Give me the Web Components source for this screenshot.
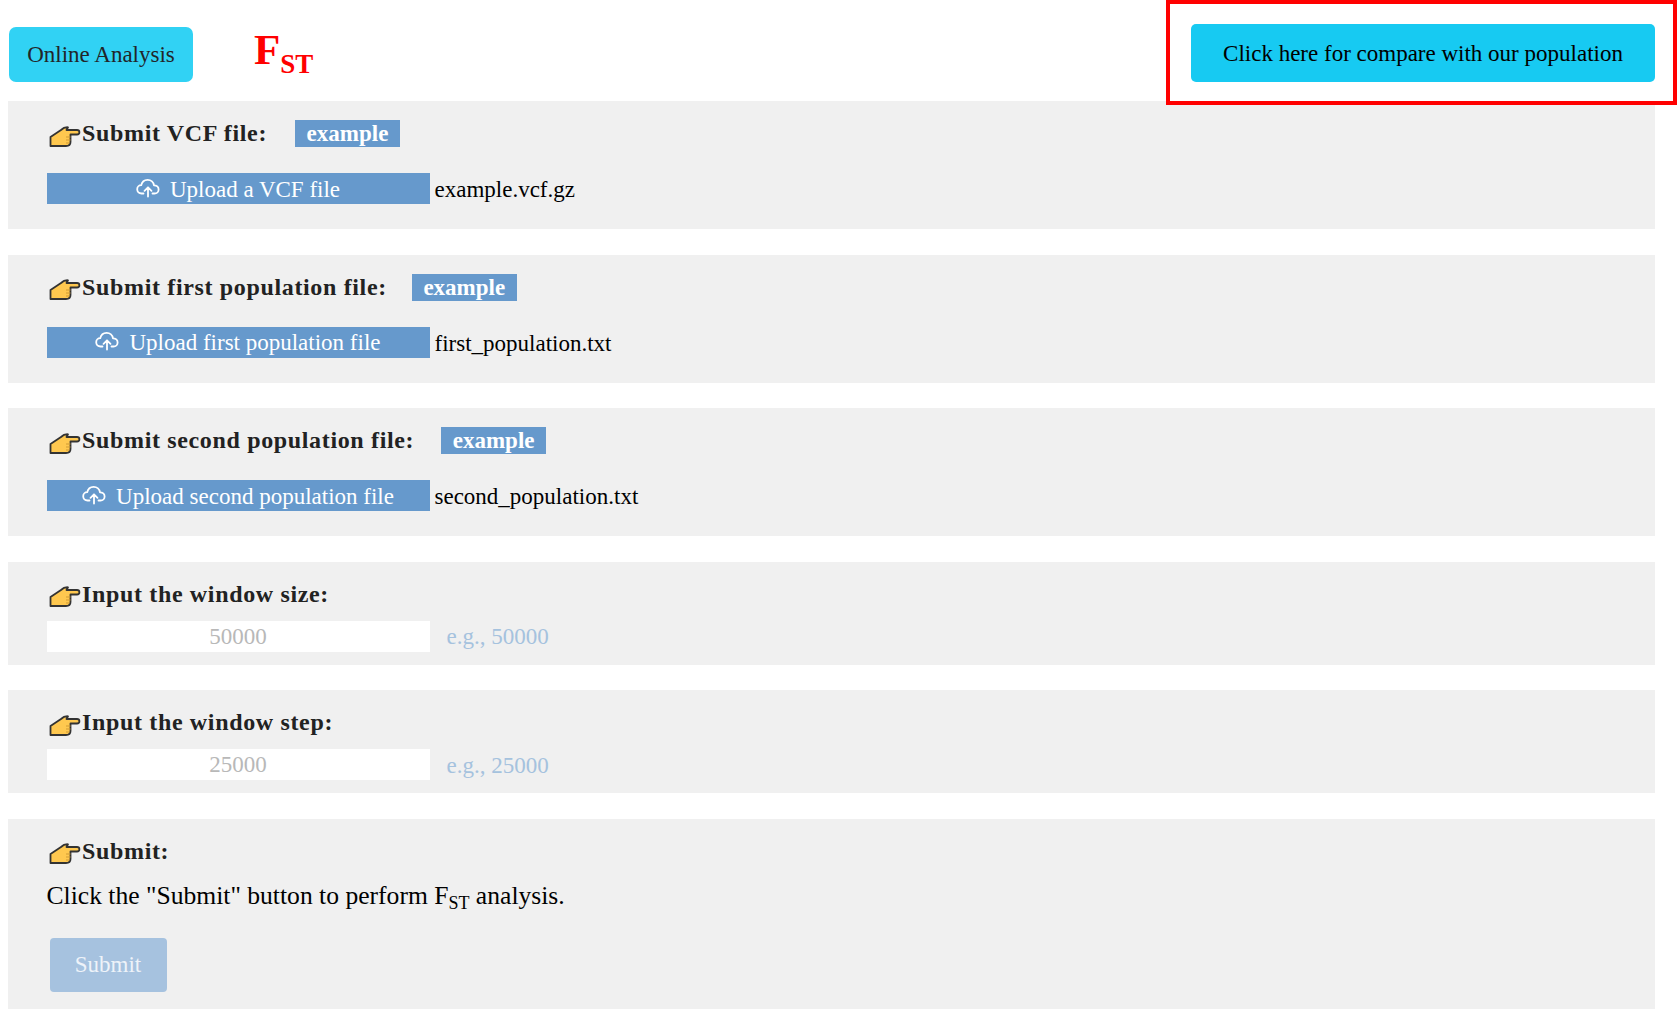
<!DOCTYPE html>
<html lang="en"><head><meta charset="utf-8"><title>FST</title>
<style>
html,body{margin:0;padding:0;background:#fff}
body{font-family:"Liberation Serif","Times New Roman",serif;color:#000;height:1020px;overflow:hidden;position:relative}
fst-page{display:block;padding:0 22px 0 8px}
</style></head><body>
<template id="hand"><style>:host{display:inline-block;width:33px;height:23px;flex:none;margin-top:5px}svg{display:block}</style>
<svg width="32" height="23" viewBox="0 0 32 23"><path d="M1.500 21V12L12 5Q15 2 19 2.300L17.500 5H28C31.200 5 31.200 9.500 28 9.500H21.500V17Q21.500 21 17 21Z" fill="#ffc84f" stroke="#333" stroke-width="1.800" stroke-linejoin="round"/><path d="M17 12H21.500M17 15H21.500M17 18H20.500" stroke="#d09a35" stroke-width="1"/></svg></template>

<template id="cloud"><style>:host{display:inline-block;width:24px;height:20px;flex:none}svg{display:block}</style>
<svg width="24" height="20" viewBox="0 0 24 20" fill="none" stroke="#fff" stroke-width="1.800" stroke-linecap="round" stroke-linejoin="round"><path d="M7.500 15.500H5.600C3 15.500 1.200 13.600 1.200 11.300 1.200 9 3 7.200 5.200 7.200 5.900 4 8.500 1.800 11.600 1.800 15 1.800 17.600 4.300 18 7.300 20.600 7.300 22.600 9.100 22.600 11.400 22.600 13.700 20.800 15.500 18.500 15.500H16.500"/><path d="M12 18.500V9.500M8.500 12.800 12 9.300 15.500 12.800"/></svg></template>

<template id="sec"><style>
:host{display:block;background:#f0f0f0;padding:18.500px 38.500px 0;box-sizing:border-box;margin-bottom:25.500px}
.h{display:flex;align-items:center;height:28px;font-weight:bold;font-size:24px;letter-spacing:.65px;color:#222;padding-left:2.500px}
</style><div class="h"><fst-hand></fst-hand><slot name="title"></slot></div><slot></slot></template>

<template id="ex"><style>:host{display:inline-block;background:#6699cc;color:#fff;font-weight:bold;font-size:23px;line-height:27px;height:27px;padding:0 11.500px;margin-left:26px;letter-spacing:0}</style><slot></slot></template>

<template id="up"><style>
:host{display:flex;align-items:center;margin-top:25.500px;height:31px;font-size:23px}
.b{width:383px;height:31px;background:#6699cc;color:#fff;display:flex;align-items:center;justify-content:center;gap:10px;box-sizing:border-box;padding-top:2px}
fst-cloud{margin-top:-4px}
.f{margin-left:5px;color:#000;padding-top:3px}
</style><div class="b"><fst-cloud></fst-cloud><span><slot name="label"></slot></span></div><span class="f"><slot></slot></span></template>

<template id="inp"><style>
:host{display:flex;align-items:center;margin-top:12.500px;height:31px;font-size:23px}
.v{width:383px;height:31px;line-height:32px;background:#fff;color:#b8b8b8;text-align:center}
.h{margin-left:17px;color:#a5c2de;padding-top:2px}
</style><div class="v"><slot name="value"></slot></div><span class="h"><slot></slot></span></template>

<template id="top"><style>
:host{display:flex;align-items:flex-start;height:101px}
.on{margin:27px 0 0 1px;width:184px;height:55px;box-sizing:border-box;background:#31d2f4;border-radius:7px;color:#212529;font-size:23px;display:flex;align-items:center;justify-content:center}
.t{margin:25px 0 0 61px;color:#f00;font-weight:bold;font-size:43px;line-height:50px;white-space:nowrap}
sub{font-size:27px;vertical-align:-9px;line-height:0}
.c{margin:24px 0 0 auto;width:464px;height:58px;box-sizing:border-box;padding-top:1px;background:#17caf2;border-radius:5px;color:#000;font-size:23px;display:flex;align-items:center;justify-content:center}
.box{position:absolute;left:1166px;top:0;width:511px;height:105px;box-sizing:border-box;border:4px solid #f00;pointer-events:none}
</style><div class="on">Online Analysis</div><div class="t">F<sub>ST</sub></div><div class="c">Click here for compare with our population</div><div class="box"></div></template>

<template id="go"><style>
:host{display:block}
p{margin:13px 0 0;font-size:25.600px;line-height:36px;color:#000}
sub{font-size:18px;vertical-align:-5px;line-height:0}
.s{margin:23.500px 0 0 3px;width:117px;height:54px;background:#a6c2df;border-radius:4px;color:#eef3f9;font-size:23px;display:flex;align-items:center;justify-content:center}
</style><p>Click the "Submit" button to perform F<sub>ST</sub> analysis.</p><div class="s">Submit</div></template>

<fst-page>
<fst-top></fst-top>
<fst-sec style="height:128px"><span slot="title">Submit VCF file:</span><fst-ex slot="title" style="margin-left:28px">example</fst-ex>
<fst-up><span slot="label">Upload a VCF file</span>example.vcf.gz</fst-up></fst-sec>
<fst-sec style="height:128px"><span slot="title">Submit first population file:</span><fst-ex slot="title" style="margin-left:25px">example</fst-ex>
<fst-up><span slot="label">Upload first population file</span>first_population.txt</fst-up></fst-sec>
<fst-sec style="height:128px"><span slot="title">Submit second population file:</span><fst-ex slot="title" style="margin-left:27px">example</fst-ex>
<fst-up><span slot="label">Upload second population file</span>second_population.txt</fst-up></fst-sec>
<fst-sec style="height:103px"><span slot="title">Input the window size:</span>
<fst-inp><span slot="value">50000</span>e.g., 50000</fst-inp></fst-sec>
<fst-sec style="height:103px"><span slot="title">Input the window step:</span>
<fst-inp><span slot="value">25000</span>e.g., 25000</fst-inp></fst-sec>
<fst-sec style="height:190px;margin-bottom:0"><span slot="title">Submit:</span><fst-go></fst-go></fst-sec>
</fst-page>
<script>
const reg=(name,id)=>customElements.define(name,class extends HTMLElement{constructor(){super();this.attachShadow({mode:"open"}).appendChild(document.getElementById(id).content.cloneNode(true));}});
reg("fst-hand","hand");reg("fst-cloud","cloud");reg("fst-sec","sec");reg("fst-ex","ex");reg("fst-up","up");reg("fst-inp","inp");reg("fst-top","top");reg("fst-go","go");
</script>
</body></html>
